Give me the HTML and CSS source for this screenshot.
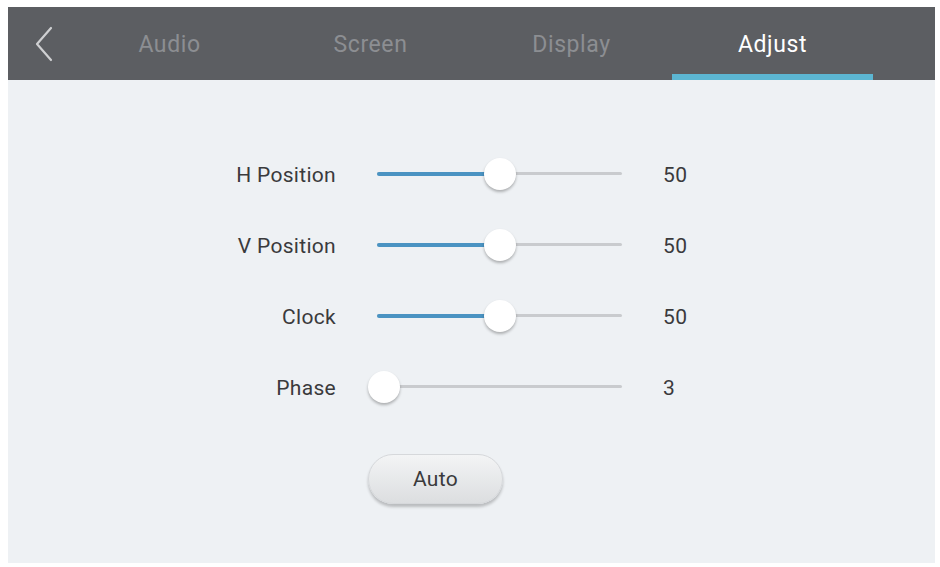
FILE: index.html
```html
<!DOCTYPE html>
<html lang="en">
<head>
    <meta charset="UTF-8">
    <meta name="viewport" content="width=device-width, initial-scale=1.0">
    <title>Adjust</title>
    <link rel="stylesheet" href="styles.css">
</head>
<body>
    <div class="device">
        <div class="topbar">
            <div class="back">
                <svg width="20" height="36" viewBox="0 0 20 36">
                    <polyline points="17,2 3,18 17,34" fill="none" stroke="#cfd0d2" stroke-width="2.2" stroke-linecap="round" stroke-linejoin="round"/>
                </svg>
            </div>
            <div class="tab">Audio</div>
            <div class="tab">Screen</div>
            <div class="tab">Display</div>
            <div class="tab active">Adjust</div>
        </div>
        <div class="panel">
            <div class="rows">
                <div class="label">H Position</div>
                <div class="slider">
                    <div class="fill" style="width: 50%"></div>
                    <div class="thumb" style="left: 50%"></div>
                </div>
                <div class="value">50</div>

                <div class="label">V Position</div>
                <div class="slider">
                    <div class="fill" style="width: 50%"></div>
                    <div class="thumb" style="left: 50%"></div>
                </div>
                <div class="value">50</div>

                <div class="label">Clock</div>
                <div class="slider">
                    <div class="fill" style="width: 50%"></div>
                    <div class="thumb" style="left: 50%"></div>
                </div>
                <div class="value">50</div>

                <div class="label">Phase</div>
                <div class="slider">
                    <div class="fill" style="width: 3%"></div>
                    <div class="thumb" style="left: 3%"></div>
                </div>
                <div class="value">3</div>

                <button class="auto">Auto</button>
            </div>
        </div>
    </div>
</body>
</html>
```
FILE: styles.css
```css
body {
    margin: 0;
    background-color: #ffffff;
    font-family: Roboto, "Noto Sans", sans-serif;
}
.device {
    margin: 7px 0 0 8px;
    width: 927px;
    height: 556px;
    display: flex;
    flex-direction: column;
    background-color: #eef1f4;
}
.topbar {
    height: 73px;
    display: flex;
    background-color: #5c5e62;
}
.back {
    width: 61px;
    box-sizing: border-box;
    display: flex;
    align-items: center;
    padding-left: 26px;
}
.tab {
    width: 201px;
    display: flex;
    align-items: center;
    justify-content: center;
    color: #8c8e92;
    font-size: 23px;
    letter-spacing: 0.6px;
    box-sizing: border-box;
    padding-top: 1px;
}
.tab.active {
    color: #ffffff;
    border-bottom: 6px solid #5cb6d2;
    padding-top: 7px;
}
.panel {
    flex: 1;
    padding: 59px 0 0 128px;
}
.rows {
    display: grid;
    grid-template-columns: 200px 245px 60px;
    grid-auto-rows: 71px;
    column-gap: 41px;
    align-items: center;
}
.label {
    text-align: right;
    font-size: 21px;
    letter-spacing: 0.3px;
    color: #3a3a3c;
}
.value {
    font-size: 21px;
    letter-spacing: 0.5px;
    color: #3a3a3c;
}
.slider {
    position: relative;
    height: 3px;
    background-color: #c9cbce;
    border-radius: 2px;
    margin-top: -2px;
}
.fill {
    height: 4px;
    margin-top: -0.5px;
    background-color: #4a93c2;
    border-radius: 2px;
}
.thumb {
    position: absolute;
    top: 50%;
    width: 32px;
    height: 32px;
    margin: -16px 0 0 -16px;
    border-radius: 50%;
    background-color: #ffffff;
    box-shadow: 0 2px 3px rgba(0, 0, 0, 0.28);
}
.auto {
    grid-column: 2;
    justify-self: start;
    align-self: start;
    margin: 31px 0 0 -9px;
    width: 135px;
    height: 50px;
    border: 1px solid #d6d8db;
    border-radius: 25px;
    background: linear-gradient(#f3f4f5, #dcdee0);
    box-shadow: 0 3px 3px rgba(0, 0, 0, 0.22);
    font-family: Roboto, "Noto Sans", sans-serif;
    font-size: 21px;
    letter-spacing: 0.3px;
    color: #3a3a3c;
}
```
